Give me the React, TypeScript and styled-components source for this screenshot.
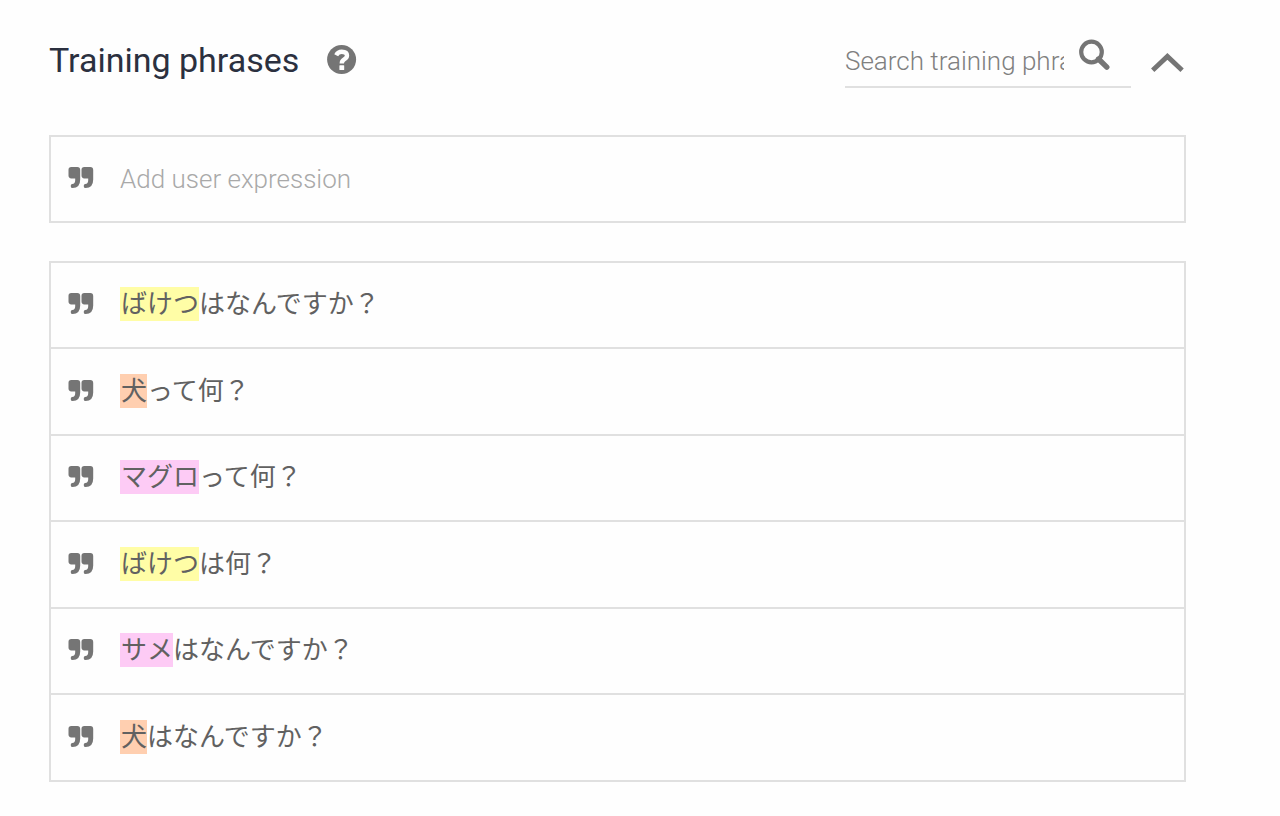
import React from "react";
import styled, { createGlobalStyle } from "styled-components";

const GlobalStyle = createGlobalStyle`
  *, *::before, *::after { box-sizing: border-box; }
  body {
    margin: 0;
    background: #fefefe;
    color: #616161;
    font-family: Roboto, "Noto Sans CJK JP", sans-serif;
    font-size: 26px;
    line-height: 34px;
  }
`;

const Page = styled.main`
  padding: 32px 94px 34px 49px;
`;

const Header = styled.header`
  display: flex;
  align-items: center;
  height: 56px;
  margin-bottom: 47px;
`;

const Title = styled.h2`
  margin: 0;
  color: #2b303f;
  font-size: 34px;
  font-weight: 400;
  line-height: 56px;
`;

const IconButton = styled.button`
  display: flex;
  flex: none;
  padding: 0;
  border: 0;
  background: none;
  color: #757575;
  cursor: pointer;
`;

const HelpButton = styled(IconButton)`
  margin-left: 28px;
`;

const SearchField = styled.form`
  display: flex;
  align-items: flex-start;
  width: 286px;
  height: 56px;
  margin: 0 19px 0 auto;
  border-bottom: 2px solid #e0e0e0;
`;

const TextInput = styled.input<{ $hint: string }>`
  flex: 1;
  min-width: 0;
  padding: 2px 0 0;
  border: 0;
  outline: 0;
  background: none;
  color: #616161;
  font: inherit;
  font-weight: 300;

  &::placeholder {
    color: ${(p) => p.$hint};
    opacity: 1;
  }
`;

const SearchInput = styled(TextInput)`
  height: 56px;
`;

const SearchButton = styled(IconButton)`
  margin: 6px 19px 0 14px;
`;

const CollapseButton = styled(IconButton)`
  margin-right: 2px;
`;

const AddPanel = styled.div`
  display: flex;
  height: 88px;
  margin-bottom: 38px;
  border: 2px solid #e0e0e0;
`;

const Line = styled.div`
  display: flex;
  flex: 1;
  align-items: center;
  padding: 0 17px 2px;
`;

const QuoteSvg = styled.svg`
  flex: none;
  margin-right: 26px;
  color: #757575;
`;

const PhraseList = styled.ul`
  display: grid;
  grid-auto-rows: 86px 87px;
  margin: 0;
  padding: 0;
  border: 2px solid #e0e0e0;
  border-bottom: 0;
  list-style: none;
`;

const PhraseItem = styled.li`
  display: flex;
  border-bottom: 2px solid #e0e0e0;
`;

const Entity = styled.mark<{ $tint: string }>`
  display: inline-block;
  padding-left: 1px;
  background: ${(p) => p.$tint};
  color: inherit;
`;

const QuoteIcon = () => (
  <QuoteSvg width="26" height="26" viewBox="0 0 26 26" fill="currentColor" aria-hidden="true">
    <path d="M3.3 2H9.3Q12.2 2 12.2 5V14.5Q12.2 23 4.6 23Q2.8 23 2.8 21.4V20.4Q2.8 19.2 4.2 19.1Q7.2 18.8 7.2 15.2V13.4H3.3Q.5 13.4 .5 10.6V4.8Q.5 2 3.3 2Z" />
    <path d="M16.3 2H22.3Q25.2 2 25.2 5V14.5Q25.2 23 17.6 23Q15.8 23 15.8 21.4V20.4Q15.8 19.2 17.2 19.1Q20.2 18.8 20.2 15.2V13.4H16.3Q13.5 13.4 13.5 10.6V4.8Q13.5 2 16.3 2Z" />
  </QuoteSvg>
);

const HelpIcon = () => (
  <svg width="30" height="30" viewBox="0 0 30 30" aria-hidden="true">
    <circle cx="14.6" cy="14.5" r="14.5" fill="currentColor" />
    <path
      d="M9.2 10.2Q11 6.8 14.8 6.8Q20 6.8 20 10.6Q20 12.8 17.2 14.4Q14.8 15.8 14.8 18.4"
      fill="none"
      stroke="#fefefe"
      strokeWidth="4.4"
    />
    <rect x="12.4" y="20.2" width="4.8" height="4.8" rx=".6" fill="#fefefe" />
  </svg>
);

const SearchIcon = () => (
  <svg width="34" height="34" viewBox="0 0 34 34" fill="none" stroke="currentColor" aria-hidden="true">
    <circle cx="13.5" cy="14" r="10.3" strokeWidth="4.2" />
    <path d="M20.5 21L28.8 29.2" strokeWidth="5.4" strokeLinecap="round" />
  </svg>
);

const ChevronUpIcon = () => (
  <svg width="34" height="34" viewBox="0 0 34 34" fill="none" stroke="currentColor" aria-hidden="true">
    <path d="M2.7 27.3L17.4 13.4L32.1 27.3" strokeWidth="4.8" />
  </svg>
);

const yellow = "#fffda6";
const orange = "#ffcfb0";
const pink = "#fdcbf5";

const phrases = [
  { entity: "ばけつ", rest: "はなんですか？", tint: yellow },
  { entity: "犬", rest: "って何？", tint: orange },
  { entity: "マグロ", rest: "って何？", tint: pink },
  { entity: "ばけつ", rest: "は何？", tint: yellow },
  { entity: "サメ", rest: "はなんですか？", tint: pink },
  { entity: "犬", rest: "はなんですか？", tint: orange },
];

export default function App() {
  return (
    <Page>
      <GlobalStyle />
      <Header>
        <Title>Training phrases</Title>
        <HelpButton type="button" aria-label="Help">
          <HelpIcon />
        </HelpButton>
        <SearchField role="search" onSubmit={(e) => e.preventDefault()}>
          <SearchInput
            type="text"
            $hint="#808080"
            aria-label="Search training phrases"
            placeholder="Search training phrases"
          />
          <SearchButton type="submit" aria-label="Search">
            <SearchIcon />
          </SearchButton>
        </SearchField>
        <CollapseButton type="button" aria-label="Collapse">
          <ChevronUpIcon />
        </CollapseButton>
      </Header>
      <AddPanel>
        <Line>
          <QuoteIcon />
          <TextInput
            type="text"
            $hint="#a9a9a9"
            aria-label="Add user expression"
            placeholder="Add user expression"
          />
        </Line>
      </AddPanel>
      <PhraseList lang="ja">
        {phrases.map((p) => (
          <PhraseItem key={p.entity + p.rest}>
            <Line>
              <QuoteIcon />
              <span>
                <Entity $tint={p.tint}>{p.entity}</Entity>
                {p.rest}
              </span>
            </Line>
          </PhraseItem>
        ))}
      </PhraseList>
    </Page>
  );
}
